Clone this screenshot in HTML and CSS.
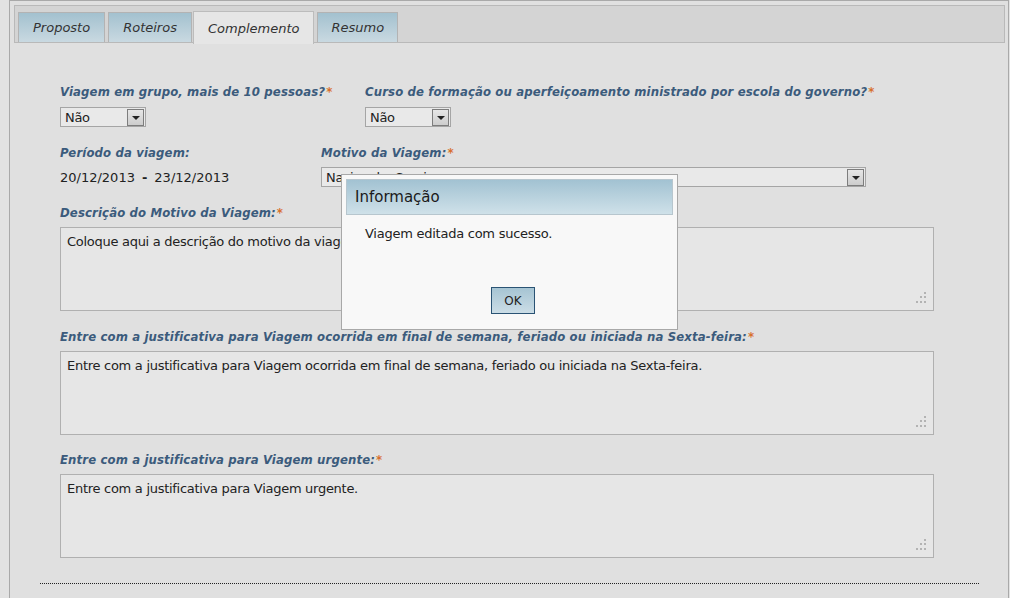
FILE: index.html
```html
<!DOCTYPE html>
<html lang="pt">
<head>
<meta charset="utf-8">
<title>Complemento</title>
<link rel="stylesheet" href="styles.css">
</head>
<body>
<div class="frame">
  <div class="tabbar">
    <div class="tab">Proposto</div>
    <div class="tab">Roteiros</div>
    <div class="tab active">Complemento</div>
    <div class="tab">Resumo</div>
  </div>

  <div class="content">
    <div class="row row1">
      <div class="field f-grupo">
        <div class="label">Viagem em grupo, mais de 10 pessoas?<span class="req">*</span></div>
        <div class="select small"><span class="val">Não</span><span class="arrow"><i></i></span></div>
      </div>
      <div class="field">
        <div class="label">Curso de formação ou aperfeiçoamento ministrado por escola do governo?<span class="req">*</span></div>
        <div class="select small"><span class="val">Não</span><span class="arrow"><i></i></span></div>
      </div>
    </div>

    <div class="row row2">
      <div class="field f-periodo">
        <div class="label">Período da viagem:</div>
        <div class="dates"><span>20/12/2013</span><span class="dash">-</span><span>23/12/2013</span></div>
      </div>
      <div class="field">
        <div class="label">Motivo da Viagem:<span class="req">*</span></div>
        <div class="select wide"><span class="val">Nacional a Serviço</span><span class="arrow"><i></i></span></div>
      </div>
    </div>

    <div class="block">
      <div class="label">Descrição do Motivo da Viagem:<span class="req">*</span></div>
      <div class="area">Coloque aqui a descrição do motivo da viagem.<svg class="grip" width="11" height="11" viewBox="0 0 11 11"><rect x="8" y="0" width="2" height="2"/><rect x="4" y="4" width="2" height="2"/><rect x="8" y="4" width="2" height="2"/><rect x="0" y="9" width="2" height="2"/><rect x="4" y="9" width="2" height="2"/><rect x="8" y="9" width="2" height="2"/></svg></div>
    </div>

    <div class="block">
      <div class="label">Entre com a justificativa para Viagem ocorrida em final de semana, feriado ou iniciada na Sexta-feira:<span class="req">*</span></div>
      <div class="area">Entre com a justificativa para Viagem ocorrida em final de semana, feriado ou iniciada na Sexta-feira.<svg class="grip" width="11" height="11" viewBox="0 0 11 11"><rect x="8" y="0" width="2" height="2"/><rect x="4" y="4" width="2" height="2"/><rect x="8" y="4" width="2" height="2"/><rect x="0" y="9" width="2" height="2"/><rect x="4" y="9" width="2" height="2"/><rect x="8" y="9" width="2" height="2"/></svg></div>
    </div>

    <div class="block block-last">
      <div class="label">Entre com a justificativa para Viagem urgente:<span class="req">*</span></div>
      <div class="area">Entre com a justificativa para Viagem urgente.<svg class="grip" width="11" height="11" viewBox="0 0 11 11"><rect x="8" y="0" width="2" height="2"/><rect x="4" y="4" width="2" height="2"/><rect x="8" y="4" width="2" height="2"/><rect x="0" y="9" width="2" height="2"/><rect x="4" y="9" width="2" height="2"/><rect x="8" y="9" width="2" height="2"/></svg></div>
    </div>

    <div class="divider"></div>
  </div>

  <div class="dialog">
    <div class="dialog-head">Informação</div>
    <div class="dialog-body">Viagem editada com sucesso.</div>
    <div class="dialog-foot"><button class="ok">OK</button></div>
  </div>
</div>
</body>
</html>
```
FILE: styles.css
```css
html, body {
  margin: 0;
  padding: 0;
  background: #e2e2e2;
  font-family: "DejaVu Sans", Verdana, sans-serif;
  font-size: 13px;
  color: #222;
}

.frame {
  position: relative;
  margin-left: 9px;
  width: 998px;
  height: 598px;
  border: 1px solid #a9a9a9;
  border-bottom: none;
  background: #e0e0e0;
  overflow: hidden;
}

.tabbar {
  margin: 4px 3px 0 4px;
  height: 36px;
  border: 1px solid #b9b9b9;
  background: #d4d4d4;
  display: flex;
  align-items: flex-end;
  gap: 3px;
  padding-left: 3px;
}

.tab {
  height: 29px;
  border: 1px solid #b3b3b3;
  border-bottom: none;
  background: linear-gradient(#a3c1cf, #c9d9e1);
  font-style: italic;
  color: #333;
  display: flex;
  align-items: center;
  padding: 0 14px;
  font-size: 13px;
}

.tab:last-child { padding: 0 13px; }

.tab.active {
  background: #e6e6e6;
  height: 32px;
  margin-bottom: -2px;
  margin-left: -2px;
  border-color: #bcbcbc;
}

.content {
  padding: 40px 0 0 50px;
}

.row {
  display: flex;
}

.row2 {
  margin-top: 17px;
}

.f-grupo { width: 305px; }
.f-periodo { width: 261px; }

.label {
  font-family: "DejaVu Sans Condensed", "DejaVu Sans", sans-serif;
  font-weight: bold;
  font-style: italic;
  color: #3b5b7c;
  line-height: 16px;
  padding-top: 1px;
  margin-bottom: 7px;
  white-space: nowrap;
  letter-spacing: 0.13px;
}

.row2 .label, .block .label { margin-bottom: 6px; }

.req {
  color: #d8702e;
  font-style: normal;
  font-weight: bold;
  margin-left: 1px;
}

.select {
  box-sizing: border-box;
  height: 20px;
  border: 1px solid #a5a5a5;
  background: #e9e9e9;
  display: flex;
  align-items: center;
  justify-content: space-between;
  padding-left: 4px;
  overflow: hidden;
  letter-spacing: -0.3px;
}

.select.small { width: 86px; }
.select.wide { width: 545px; }

.select .val { line-height: 18px; white-space: nowrap; padding-top: 1px; }

.arrow {
  box-sizing: border-box;
  width: 17px;
  height: 17px;
  margin-right: 1px;
  border: 1px solid #7d7d7d;
  background: linear-gradient(#e6e6e6, #cdcdcd);
  display: flex;
  align-items: center;
  justify-content: center;
}

.arrow i {
  width: 0;
  height: 0;
  border-left: 4px solid transparent;
  border-right: 4px solid transparent;
  border-top: 4px solid #222;
  margin-top: 1px;
}

.dates {
  box-sizing: border-box;
  height: 20px;
  line-height: 18px;
  padding-top: 2px;
  display: flex;
  gap: 7px;
  color: #222;
}

.dates .dash { font-weight: bold; }

.block {
  margin-top: 17px;
  width: 874px;
}

.block-last { margin-top: 16px; }

.area {
  position: relative;
  box-sizing: border-box;
  height: 84px;
  border: 1px solid #b0b0b0;
  background: #e6e6e6;
  padding: 6px;
  line-height: 16px;
  color: #222;
  white-space: nowrap;
  overflow: hidden;
  letter-spacing: -0.28px;
}

.grip {
  position: absolute;
  right: 6px;
  bottom: 7px;
  fill: #b3b3b3;
}

.divider {
  margin: 25px 0 0 -20px;
  width: 939px;
  border-top: 1px dotted #222;
}

.dialog {
  position: absolute;
  left: 331px;
  top: 173px;
  width: 335px;
  height: 154px;
  border: 1px solid #a8a8a8;
  background: #f8f8f8;
  display: flex;
  flex-direction: column;
}

.dialog-head {
  margin: 4px 4px 0 4px;
  height: 34px;
  border: 1px solid #b7c6ce;
  background: linear-gradient(#a2c2d2, #cfe1e9);
  font-size: 15px;
  line-height: 34px;
  padding-left: 8px;
  color: #1a1a1a;
}

.dialog-body {
  padding: 11px 0 0 23px;
  line-height: 16px;
  color: #222;
  letter-spacing: -0.25px;
}

.dialog-foot {
  margin-top: auto;
  display: flex;
  justify-content: center;
  padding-bottom: 15px;
}

.ok {
  width: 44px;
  height: 27px;
  border: 1px solid #2a5374;
  background: linear-gradient(#a6c4d3, #cbdde6);
  font-family: "DejaVu Sans", Verdana, sans-serif;
  font-size: 12px;
  color: #222;
  padding: 0;
  margin-left: 7px;
}
```
